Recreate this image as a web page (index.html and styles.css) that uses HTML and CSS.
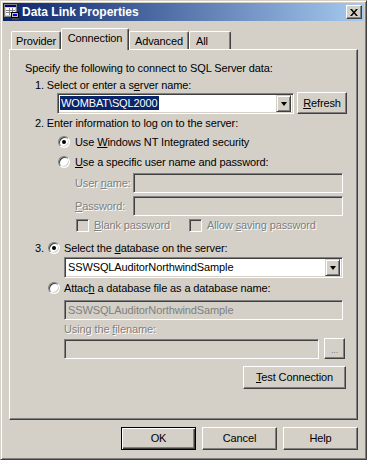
FILE: index.html
```html
<!DOCTYPE html>
<html lang="en">
<head>
  <meta charset="UTF-8">
  <title>Data Link Properties</title>
  <link rel="stylesheet" href="styles.css">
</head>
<body>
  <div class="window">
    <div class="titlebar">
      <svg class="app-icon" width="16" height="16" viewBox="0 0 16 16">
        <rect x="0.5" y="0.5" width="12" height="12" fill="#d4d0c8" stroke="#808080"/>
        <rect x="1" y="1" width="11" height="2" fill="#000080"/>
        <rect x="2" y="4" width="9" height="7" fill="#fff"/>
        <path d="M2 6.5h9M2 8.5h9M5.5 4v7M8.5 4v7" stroke="#808080"/>
        <rect x="7.5" y="8.5" width="7" height="5" fill="#c0c0c0" stroke="#000"/>
        <rect x="9" y="10" width="4" height="2" fill="#0000ff"/>
        <rect x="8" y="14" width="7" height="2" fill="#404040"/>
      </svg>
      <span class="title">Data Link Properties</span>
      <button class="close-btn">
        <svg width="8" height="7" viewBox="0 0 8 7">
          <path d="M0 0h2l2 2.5L6 0h2L5 3.5 8 7H6L4 4.5 2 7H0l3-3.5z" fill="#000"/>
        </svg>
      </button>
    </div>

    <div class="dialog-body">
      <div class="tabs">
        <div class="tab tab-provider">Provider</div>
        <div class="tab tab-connection selected">Connection</div>
        <div class="tab tab-advanced">Advanced</div>
        <div class="tab tab-all">All</div>
      </div>

      <div class="panel">
        <div class="intro">Specify the following to connect to SQL Server data:</div>

        <div class="step step-1">1. Select or enter a s<u>e</u>rver name:</div>
        <div class="server-row">
          <div class="combo combo-server">
            <span class="combo-text"><span class="selection">WOMBAT\SQL2000</span></span>
            <span class="combo-arrow"></span>
          </div>
          <button class="btn btn-refresh"><u>R</u>efresh</button>
        </div>

        <div class="step step-2">2. Enter information to log on to the server:</div>
        <div class="radio-row radio-nt">
          <span class="radio checked"></span>
          <span>Use <u>W</u>indows NT Integrated security</span>
        </div>
        <div class="radio-row radio-specific">
          <span class="radio"></span>
          <span><u>U</u>se a specific user name and password:</span>
        </div>

        <div class="field-row field-user">
          <span class="field-label disabled">User <u>n</u>ame:</span>
          <span class="textbox textbox-disabled textbox-login"></span>
        </div>
        <div class="field-row field-password">
          <span class="field-label disabled"><u>P</u>assword:</span>
          <span class="textbox textbox-disabled textbox-login"></span>
        </div>

        <div class="check-row">
          <div class="check-item check-blank">
            <span class="checkbox"></span>
            <span class="disabled"><u>B</u>lank password</span>
          </div>
          <div class="check-item">
            <span class="checkbox"></span>
            <span class="disabled">Allow <u>s</u>aving password</span>
          </div>
        </div>

        <div class="radio-row radio-db">
          <span class="step-num">3.</span>
          <span class="radio checked"></span>
          <span>Select the <u>d</u>atabase on the server:</span>
        </div>
        <div class="combo combo-db">
          <span class="combo-text">SSWSQLAuditorNorthwindSample</span>
          <span class="combo-arrow"></span>
        </div>

        <div class="radio-row radio-attach">
          <span class="radio"></span>
          <span>Attac<u>h</u> a database file as a database name:</span>
        </div>
        <div class="textbox textbox-disabled textbox-dbname">SSWSQLAuditorNorthwindSample</div>

        <div class="filename-label disabled">Using the <u>f</u>ilename:</div>
        <div class="filename-row">
          <span class="textbox textbox-disabled textbox-file"></span>
          <button class="btn btn-browse">...</button>
        </div>

        <div class="test-row">
          <button class="btn btn-test"><u>T</u>est Connection</button>
        </div>
      </div>

      <div class="footer">
        <button class="btn btn-default">OK</button>
        <button class="btn">Cancel</button>
        <button class="btn">Help</button>
      </div>
    </div>
  </div>
</body>
</html>
```

FILE: styles.css
```css
* {
  box-sizing: border-box;
}

body {
  margin: 0;
  background: #d4d0c8;
  font-family: 'Liberation Sans', Arial, sans-serif;
  font-size: 11px;
  line-height: 13px;
  letter-spacing: -0.12px;
  color: #000;
}

u {
  text-underline-offset: 1px;
}

/* window frame */

.window {
  width: 367px;
  height: 460px;
  padding: 2px;
  background: #d4d0c8;
  border: 1px solid;
  border-color: #d4d0c8 #404040 #404040 #d4d0c8;
  box-shadow: inset 1px 1px #fff, inset -1px -1px #808080;
}

.titlebar {
  height: 18px;
  display: flex;
  align-items: center;
  padding-left: 1px;
  background: linear-gradient(to right, #0a246a, #a6caf0);
  color: #fff;
}

.app-icon {
  margin-right: 2px;
  flex: none;
}

.title {
  font-weight: bold;
  font-size: 12px;
  letter-spacing: 0;
}

.close-btn {
  margin-left: auto;
  margin-right: 2px;
  width: 16px;
  height: 14px;
  padding: 0;
  display: flex;
  align-items: center;
  justify-content: center;
  background: #d4d0c8;
  border: 1px solid;
  border-color: #fff #404040 #404040 #fff;
  box-shadow: inset -1px -1px #808080;
}

/* tabs */

.dialog-body {
  padding: 7px 0 0 6px;
}

.tabs {
  display: flex;
  align-items: flex-end;
  height: 21px;
  padding-left: 2px;
}

.tab {
  height: 18px;
  padding-top: 3px;
  text-align: center;
  background: #d4d0c8;
  border-top: 1px solid #fff;
  border-left: 1px solid #fff;
  border-right: 1px solid #404040;
  border-radius: 2px 2px 0 0;
  box-shadow: inset -1px 0 #808080;
}

.tab-provider { width: 50px; }
.tab-connection { width: 68px; }
.tab-advanced { width: 60px; }
.tab-all { width: 42px; text-align: left; padding-left: 6px; }

.tab.selected {
  height: 22px;
  margin-bottom: -1px;
  position: relative;
  z-index: 1;
}

.panel {
  width: 349px;
  height: 371px;
  padding-top: 12px;
  border: 1px solid;
  border-color: #fff #404040 #404040 #fff;
  box-shadow: inset -1px -1px #808080;
}

/* panel rows */

.intro {
  margin-left: 15px;
}

.step {
  margin-left: 25px;
}

.step-1 { margin-top: 4px; }
.step-2 { margin-top: 3px; }

.server-row {
  display: flex;
  height: 22px;
  margin-left: 47px;
}

.combo {
  display: flex;
  align-items: center;
  height: 21px;
  padding: 2px 2px 2px 3px;
  background: #fff;
  border: 1px solid;
  border-color: #808080 #fff #fff #808080;
  box-shadow: inset 1px 1px #404040, inset -1px -1px #d4d0c8;
}

.combo-text {
  flex: 1;
  white-space: nowrap;
}

.combo-server {
  width: 237px;
  margin-top: 1px;
  padding-left: 2px;
}

.selection {
  background: #0a246a;
  color: #fff;
  padding: 1px 1px;
}

.combo-arrow {
  width: 15px;
  height: 17px;
  flex: none;
  background: #d4d0c8;
  border: 1px solid;
  border-color: #d4d0c8 #404040 #404040 #d4d0c8;
  box-shadow: inset 1px 1px #fff, inset -1px -1px #808080;
  display: flex;
  align-items: center;
  justify-content: center;
}

.combo-arrow::after {
  content: "";
  border-style: solid;
  border-width: 4px 3.5px 0 3.5px;
  border-color: #000 transparent transparent transparent;
  margin-top: 1px;
}

.btn {
  font: inherit;
  letter-spacing: inherit;
  color: #000;
  padding: 0;
  width: 75px;
  height: 23px;
  background: #d4d0c8;
  border: 1px solid;
  border-color: #fff #404040 #404040 #fff;
  box-shadow: inset -1px -1px #808080;
}

.btn-default {
  border-color: #000;
  box-shadow: inset 1px 1px #fff, inset -1px -1px #404040, inset -2px -2px #808080;
}

.btn-refresh {
  width: 50px;
  height: 22px;
  margin-left: 3px;
}

.radio-row {
  display: flex;
  align-items: center;
  height: 14px;
  margin-left: 48px;
}

.radio-nt { margin-top: 5px; }
.radio-specific { margin-top: 6px; }

.radio {
  flex: none;
  width: 12px;
  height: 12px;
  margin-right: 5px;
  border-radius: 50%;
  background: #fff;
  border: 1px solid;
  border-color: #808080 #fff #fff #808080;
  box-shadow: inset 1px 1px #404040, inset -1px -1px #d4d0c8;
  display: flex;
  align-items: center;
  justify-content: center;
}

.radio.checked::after {
  content: "";
  width: 4px;
  height: 4px;
  border-radius: 50%;
  background: #000;
}

.disabled {
  color: #808080;
  text-shadow: 1px 1px #fff;
}

.field-row {
  display: flex;
  align-items: center;
  height: 20px;
  margin-left: 65px;
}

.field-user { margin-top: 4px; }
.field-password { margin-top: 3px; }

.field-label {
  width: 58px;
}

.textbox {
  display: block;
  height: 20px;
  padding: 3px 3px;
  background: #fff;
  border: 1px solid;
  border-color: #808080 #fff #fff #808080;
  box-shadow: inset 1px 1px #404040, inset -1px -1px #d4d0c8;
  white-space: nowrap;
}

.textbox-disabled {
  background: #d4d0c8;
  color: #808080;
}

.textbox-login {
  width: 210px;
}

.check-row {
  display: flex;
  align-items: center;
  height: 13px;
  margin: 3px 0 0 66px;
}

.check-item {
  display: flex;
  align-items: center;
}

.check-blank {
  width: 113px;
}

.checkbox {
  width: 13px;
  height: 13px;
  margin-right: 5px;
  background: #d4d0c8;
  border: 1px solid;
  border-color: #808080 #fff #fff #808080;
  box-shadow: inset 1px 1px #404040, inset -1px -1px #d4d0c8;
}

.radio-db {
  margin-top: 9px;
  margin-left: 25px;
}

.step-num {
  width: 13px;
}

.radio-db .radio,
.radio-attach .radio {
  margin-right: 4px;
}

.combo-db {
  width: 279px;
  margin: 2px 0 0 54px;
}

.radio-attach {
  margin-top: 3px;
  margin-left: 38px;
}

.textbox-dbname {
  width: 279px;
  margin: 5px 0 0 54px;
}

.filename-label {
  margin: 3px 0 0 54px;
}

.filename-row {
  display: flex;
  margin: 2px 0 0 54px;
}

.textbox-file {
  width: 255px;
  margin-top: 1px;
}

.btn-browse {
  width: 21px;
  height: 21px;
  margin-left: 5px;
  padding-top: 4px;
  color: #808080;
  font-size: 9px;
}

.test-row {
  margin: 7px 0 0 233px;
}

.btn-test {
  width: 103px;
}

/* dialog buttons */

.footer {
  width: 349px;
  margin-top: 7px;
  display: flex;
  justify-content: flex-end;
  gap: 6px;
}
```
